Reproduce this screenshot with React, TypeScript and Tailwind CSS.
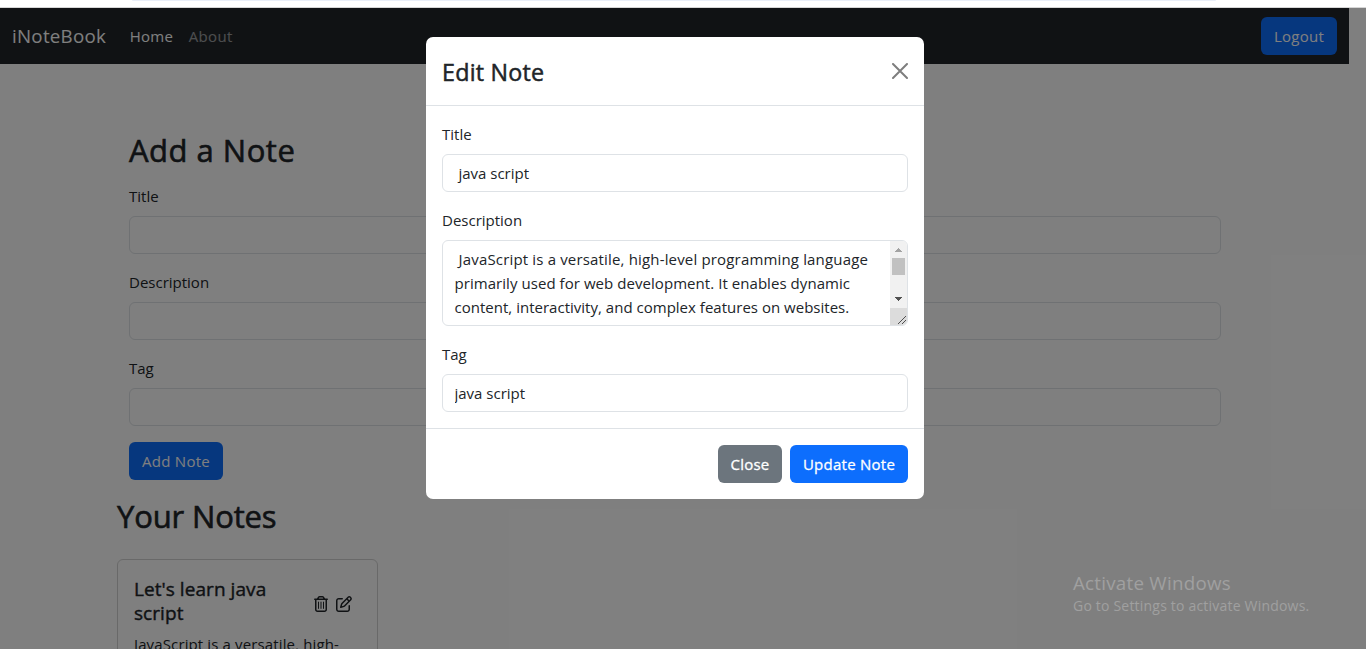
import React from "react";
import { FaRegPenToSquare, FaRegTrashCan } from "react-icons/fa6";

function Navbar() {
  return (
    <nav className="mr-[17px] flex h-14 items-center bg-[#212529] pl-3 pr-3">
      <span className="mr-[23.5px] text-[18.75px] leading-[30px] tracking-[0.25px] text-white">iNoteBook</span>
      <a className="mr-[15.5px] text-[15px] leading-6 tracking-[0.3px] text-white">Home</a>
      <a className="text-[15px] leading-6 tracking-[0.35px] text-white/55">About</a>
      <button className="ml-auto h-[38px] w-[76px] rounded-md bg-[#0d6efd] text-[15px] leading-6 tracking-[0.25px] text-white">Logout</button>
    </nav>
  );
}

function Field({ label, value = "" }: { label: string; value?: string }) {
  return (
    <div className="mb-4">
      <label className="mb-2 block h-6 text-[15px] leading-6 text-[#212529]">{label}</label>
      <input
        defaultValue={value}
        className="block h-[38px] w-full rounded-md border border-[#dee2e6] bg-white pl-[11.5px] pr-3 text-[15px] leading-6 text-[#212529] outline-none"
      />
    </div>
  );
}

function NoteCard() {
  return (
    <div className="mt-[23px] h-[240px] w-[261px] rounded-md border border-[#d3d3d3] bg-white p-4">
      <div className="mb-2 flex items-center">
        <h5 className="w-[180px] pt-px text-[19px] leading-6 tracking-[0.06px] [-webkit-text-stroke:0.4px_#212529]">
          Let&apos;s learn java
          <br />
          script
        </h5>
        <FaRegTrashCan className="mt-[7px] h-4 w-[14px]" />
        <FaRegPenToSquare className="ml-2 mt-[7px] h-4 w-4" />
      </div>
      <p className="-mt-px whitespace-nowrap text-[15px] leading-6 tracking-[0.13px]">JavaScript is a versatile, high-</p>
    </div>
  );
}

function Page() {
  return (
    <div className="h-[641px] overflow-hidden bg-white text-[#212529]">
      <Navbar />
      <main className="ml-[117px] w-[1116px] pt-[67px]">
        <section className="px-3">
          <h2 className="mb-[15px] h-[38px] text-[31px] leading-[38px] tracking-[0.5px] [-webkit-text-stroke:0.6px_#212529]">Add a Note</h2>
          <Field label="Title" />
          <Field label="Description" />
          <Field label="Tag" />
          <button className="block h-[38px] w-[94px] rounded-md bg-[#0d6efd] text-[15px] leading-6 tracking-[0.3px] text-white">Add Note</button>
        </section>
        <h2 className="mt-[18px] h-[38px] text-[31px] leading-[37px] tracking-[-0.15px] [-webkit-text-stroke:0.6px_#212529]">Your Notes</h2>
        <NoteCard />
      </main>
    </div>
  );
}

function TextareaScrollbar() {
  return (
    <div className="flex w-[17px] shrink-0 flex-col overflow-hidden rounded-r-[5px]">
      <div className="flex h-[67px] flex-col items-center bg-[#f1f1f1]">
        <svg width="17" height="17" viewBox="0 0 17 17" shapeRendering="crispEdges">
          <path d="M5 11h7L8.5 7z" fill="#a3a3a3" />
        </svg>
        <div className="h-[17px] w-[13px] bg-[#c1c1c1]" />
        <svg className="mt-auto" width="17" height="17" viewBox="0 0 17 17" shapeRendering="crispEdges">
          <path d="M5 6h7L8.5 10z" fill="#505050" />
        </svg>
      </div>
      <svg className="bg-[#dcdcdc]" width="17" height="17" viewBox="0 0 17 17">
        <path d="M8 16l8-8M12 16l4-4" stroke="#505050" fill="none" />
      </svg>
    </div>
  );
}

function EditNoteModal() {
  return (
    <div className="h-[462px] w-[498px] rounded-[7px] bg-white text-[#212529]">
      <header className="flex h-[69px] items-center justify-between border-b border-[#dee2e6] px-4">
        <h1 className="pt-[2px] text-[23.25px] leading-9 tracking-[0.25px] [-webkit-text-stroke:0.5px_#212529]">Edit Note</h1>
        <svg className="opacity-50" width="16" height="16" viewBox="0 0 16 16">
          <path d="M1 1l14 14M15 1L1 15" stroke="#000" strokeWidth="2" strokeLinecap="round" />
        </svg>
      </header>
      <div className="h-[323px] border-b border-[#dee2e6] px-4 pt-4">
        <Field label="Title" value=" java script" />
        <div className="mb-4">
          <label className="mb-2 block h-6 text-[15px] leading-6">Description</label>
          <div className="flex h-[86px] rounded-md border border-[#dee2e6]">
            <div className="flex-1 whitespace-pre pl-[11.5px] pt-[6px] text-[15px] leading-6">
              <p className="tracking-[0.165px]">{" JavaScript is a versatile, high-level programming language"}</p>
              <p className="tracking-[0.055px]">primarily used for web development. It enables dynamic</p>
              <p className="tracking-[0.015px]">content, interactivity, and complex features on websites.</p>
            </div>
            <TextareaScrollbar />
          </div>
        </div>
        <Field label="Tag" value="java script" />
      </div>
      <footer className="flex justify-end gap-2 px-4 pt-4 text-[15px] leading-6 tracking-[0.25px] text-white">
        <button className="h-[38px] w-16 rounded-md bg-[#6c757d] [-webkit-text-stroke:0.3px_#fff]">Close</button>
        <button className="h-[38px] w-[118px] rounded-md bg-[#0d6efd] [-webkit-text-stroke:0.3px_#fff]">Update Note</button>
      </footer>
    </div>
  );
}

export default function App() {
  return (
    <div className="relative h-[649px] w-[1366px] overflow-hidden bg-white font-['Open_Sans',sans-serif]">
      <div className="flex h-2 flex-col justify-between border-b border-[#d6d6d6]">
        <div className="ml-[132px] h-px w-[1084px] rounded-b bg-[#e9eef8]" />
      </div>
      <Page />
      <div className="absolute inset-x-0 bottom-0 top-2 bg-black/50 pl-[426px] pt-[29px]">
        <EditNoteModal />
      </div>
      <div className="absolute left-[1073px] top-[570px] text-[#a0a0a0]">
        <p className="text-[18.75px] leading-[26px] tracking-[0.25px]">Activate Windows</p>
        <p className="text-[14px] leading-5 tracking-[0.2px]">Go to Settings to activate Windows.</p>
      </div>
    </div>
  );
}
